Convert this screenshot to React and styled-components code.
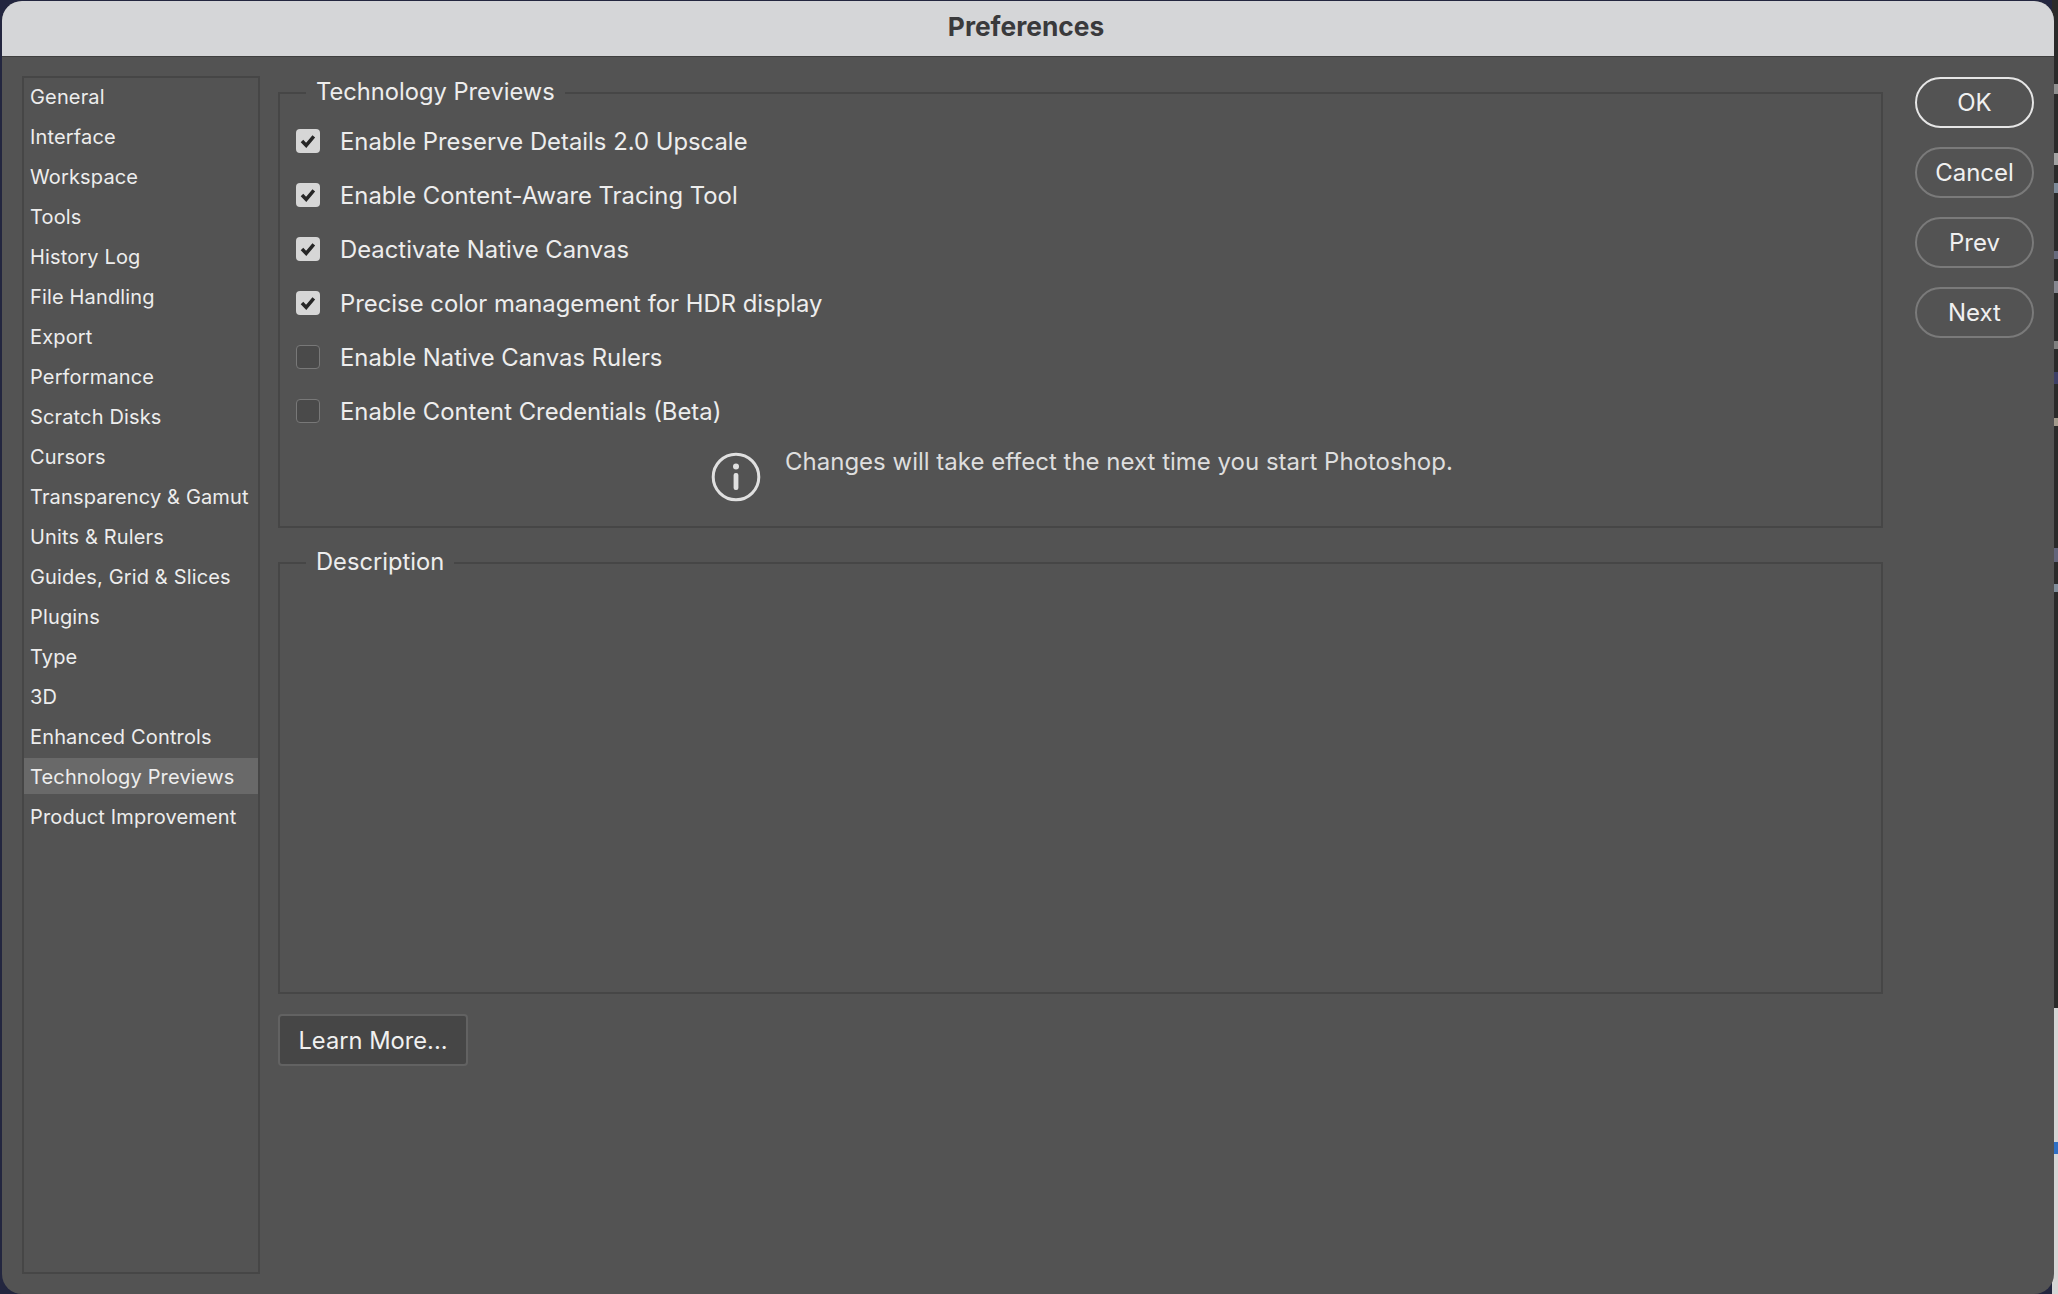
import React from 'react'
import styled, { createGlobalStyle } from 'styled-components'

const GlobalStyle = createGlobalStyle`
    html, body {
        margin: 0;
        padding: 0;
        height: 100%;
        overflow: hidden;
    }
    * {
        box-sizing: border-box;
    }
    #root {
        height: 100%;
    }
`;

const categories = [
    'General', 'Interface', 'Workspace', 'Tools', 'History Log', 'File Handling', 'Export',
    'Performance', 'Scratch Disks', 'Cursors', 'Transparency & Gamut', 'Units & Rulers',
    'Guides, Grid & Slices', 'Plugins', 'Type', '3D', 'Enhanced Controls', 'Technology Previews',
    'Product Improvement',
]

const options = [
    { label: 'Enable Preserve Details 2.0 Upscale', checked: true },
    { label: 'Enable Content-Aware Tracing Tool', checked: true },
    { label: 'Deactivate Native Canvas', checked: true },
    { label: 'Precise color management for HDR display', checked: true },
    { label: 'Enable Native Canvas Rulers', checked: false },
    { label: 'Enable Content Credentials (Beta)', checked: false },
]

// bits of the desktop that peek out to the right of the dialog
const desktopBits = [
    [84, 94, '#8f8f8f'], [153, 165, '#a3a3a3'], [183, 193, '#7d8a99'], [251, 259, '#666a7d'],
    [281, 293, '#85868f'], [341, 349, '#808080'], [372, 384, '#3d3f66'], [418, 426, '#a39a8c'],
    [548, 562, '#62647a'], [584, 592, '#7f8c99'],
]

const stripStops = () => {
    let stops = ['#2a2a2a 0']
    desktopBits.forEach(([from, to, color]) => {
        stops.push(`#2a2a2a ${from}px`, `${color} ${from}px`, `${color} ${to}px`, `#2a2a2a ${to}px`)
    })
    stops.push('#2a2a2a 1008px', '#d6d6d6 1008px', '#d6d6d6 1142px', '#2f6fc4 1142px', '#2f6fc4 1154px', '#d6d6d6 1154px')
    return stops.join(', ')
}

export default function App() {
    return (
        <Desktop>
            <GlobalStyle />
            <Window>
                <TitleBar>Preferences</TitleBar>
                <Body>
                    <Sidebar>
                        {categories.map(name => (
                            <SidebarItem key={name} $active={name === 'Technology Previews'}>{name}</SidebarItem>
                        ))}
                    </Sidebar>
                    <Main>
                        <PreviewsGroup>
                            <Legend>Technology Previews</Legend>
                            <OptionList>
                                {options.map(opt => (
                                    <Option key={opt.label}>
                                        <CheckBox $checked={opt.checked}>
                                            {opt.checked && (
                                                <svg width="16" height="14" viewBox="0 0 16 14">
                                                    <path d="M2 7 L6.2 11.4 L13.8 2.4" fill="none" stroke="#262626" strokeWidth="3.5" />
                                                </svg>
                                            )}
                                        </CheckBox>
                                        {opt.label}
                                    </Option>
                                ))}
                            </OptionList>
                            <Notice>
                                <svg width="50" height="50" viewBox="0 0 50 50">
                                    <circle cx="25" cy="25" r="22.8" fill="none" stroke="#e0e0e0" strokeWidth="3" />
                                    <circle cx="25" cy="14.5" r="3" fill="#e0e0e0" />
                                    <rect x="22.6" y="21" width="4.8" height="17" rx="2" fill="#e0e0e0" />
                                </svg>
                                <NoticeText>Changes will take effect the next time you start Photoshop.</NoticeText>
                            </Notice>
                        </PreviewsGroup>
                        <DescriptionGroup>
                            <Legend>Description</Legend>
                        </DescriptionGroup>
                        <LearnMore>Learn More...</LearnMore>
                    </Main>
                    <Actions>
                        <PillButton $primary>OK</PillButton>
                        <PillButton>Cancel</PillButton>
                        <PillButton>Prev</PillButton>
                        <PillButton>Next</PillButton>
                    </Actions>
                </Body>
            </Window>
        </Desktop>
    )
}

const Desktop = styled.div`
    width: 2058px;
    height: 1294px;
    padding: 1px 4px 0 2px;
    background:
        linear-gradient(to bottom, ${stripStops()}) right top / 6px 100% no-repeat,
        #23263f;
    font-family: Inter, "Liberation Sans", sans-serif;
`;

const Window = styled.div`
    width: 100%;
    height: 100%;
    display: flex;
    flex-direction: column;
    background: #535353;
    border-radius: 20px;
    overflow: hidden;
`;

const TitleBar = styled.div`
    height: 56px;
    flex: none;
    display: flex;
    align-items: center;
    justify-content: center;
    padding-right: 4px;
    padding-bottom: 4px;
    background: #d5d6d8;
    border-bottom: 1px solid #3f3f3f;
    color: #3a3a3c;
    font-size: 26.3px;
    font-weight: 700;
`;

const Body = styled.div`
    flex: 1;
    display: flex;
    padding: 19px 20px 20px 20px;
`;

const Sidebar = styled.div`
    width: 238px;
    flex: none;
    height: 1198px;
    border: 2px solid #464646;
    display: flex;
    flex-direction: column;
    gap: 4px;
`;

const SidebarItem = styled.div`
    height: 36px;
    flex: none;
    display: flex;
    align-items: center;
    padding: 2px 0 0 6px;
    color: #ededed;
    font-size: 20px;
    letter-spacing: 0.15px;
    background: ${props => props.$active ? '#696969' : 'transparent'};
`;

const Main = styled.div`
    width: 1605px;
    flex: none;
    margin-left: 18px;
    display: flex;
    flex-direction: column;
`;

const Group = styled.div`
    position: relative;
    width: 100%;
    border: 2px solid #464646;
`;

const PreviewsGroup = styled(Group)`
    height: 436px;
    margin-top: 16px;
    padding: 20px 16px 0;
`;

const DescriptionGroup = styled(Group)`
    height: 432px;
    margin-top: 34px;
`;

const Legend = styled.div`
    position: absolute;
    left: 26px;
    top: -19px;
    padding: 0 10px;
    background: #535353;
    color: #ededed;
    font-size: 23.7px;
    line-height: 34px;
`;

const OptionList = styled.div`
    display: flex;
    flex-direction: column;
`;

const Option = styled.div`
    height: 54px;
    display: flex;
    align-items: center;
    gap: 20px;
    color: #ededed;
    font-size: 23.85px;
`;

const CheckBox = styled.div`
    width: 24px;
    height: 24px;
    flex: none;
    display: flex;
    align-items: center;
    justify-content: center;
    border-radius: 4px;
    background: ${props => props.$checked ? '#d6d6d6' : '#4a4a4a'};
    border: ${props => props.$checked ? 'none' : '1.5px solid #787878'};
`;

const Notice = styled.div`
    display: flex;
    align-items: flex-start;
    gap: 24px;
    margin-left: 415px;
    margin-top: 14px;
`;

const NoticeText = styled.div`
    margin-top: -7px;
    color: #dedede;
    font-size: 24px;
    line-height: 34px;
`;

const LearnMore = styled.button`
    width: 190px;
    height: 52px;
    margin-top: 20px;
    padding: 0;
    border: 2px solid #626262;
    border-radius: 4px;
    background: #464646;
    color: #f0f0f0;
    font-family: inherit;
    font-size: 23.7px;
`;

const Actions = styled.div`
    margin-left: 32px;
    margin-top: 1px;
    width: 119px;
    flex: none;
    display: flex;
    flex-direction: column;
    gap: 19px;
`;

const PillButton = styled.button`
    width: 119px;
    height: 51px;
    padding: 0;
    border-radius: 26px;
    border: 2px solid ${props => props.$primary ? '#e6e6e6' : '#7a7a7a'};
    background: transparent;
    color: #f0f0f0;
    font-family: inherit;
    font-size: 24px;
`;
